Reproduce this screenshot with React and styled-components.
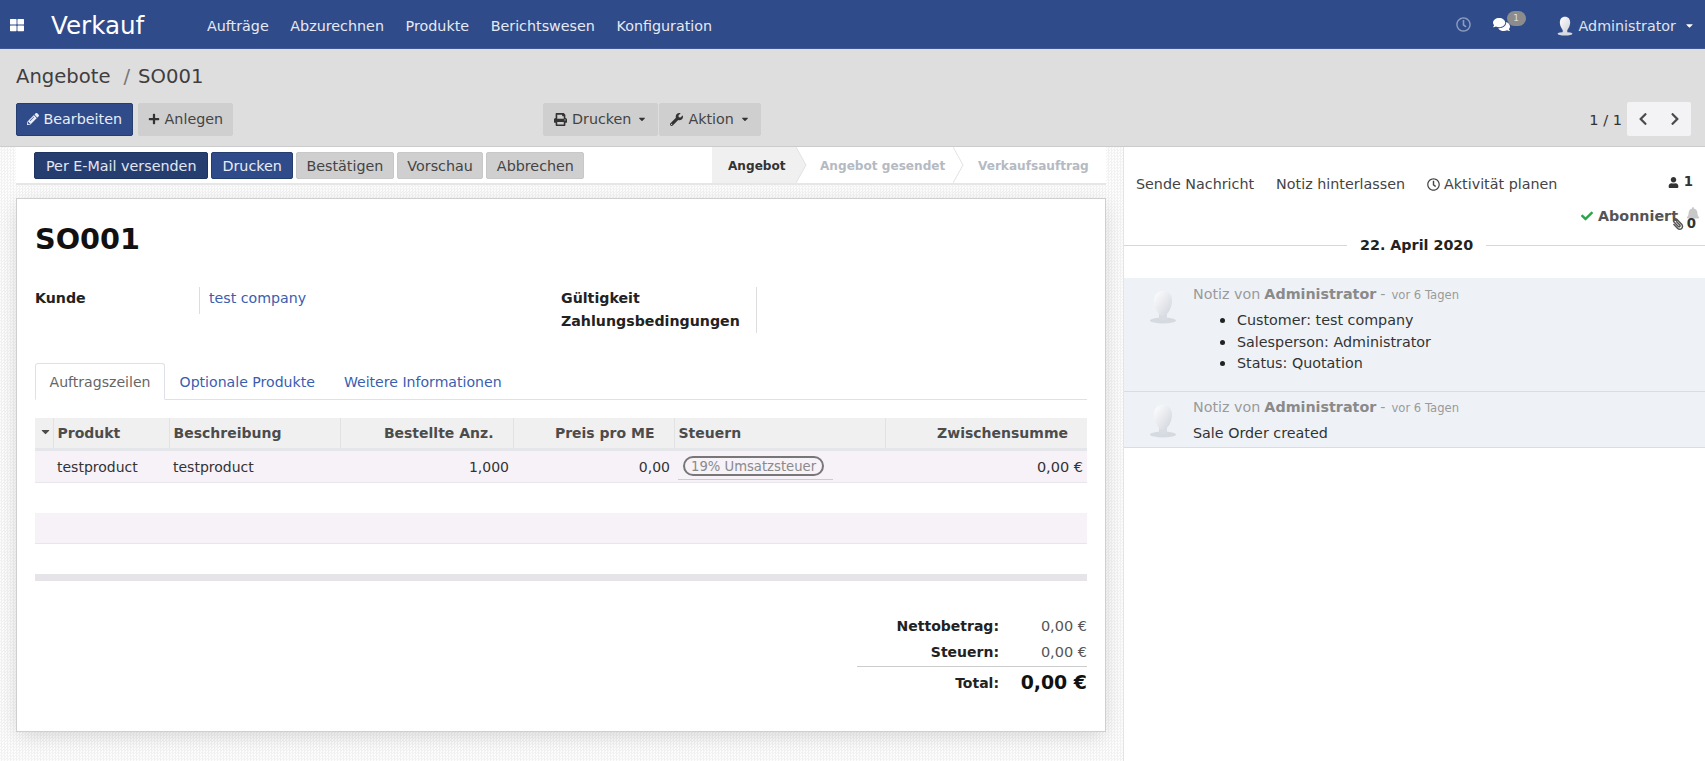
import React from 'react';
import styled, { createGlobalStyle } from 'styled-components';
import { FaThLarge, FaPencilAlt, FaPlus, FaPrint, FaWrench, FaRegClock, FaComments, FaChevronLeft, FaChevronRight, FaCheck, FaUser, FaBell, FaPaperclip, FaCaretDown } from 'react-icons/fa';

const Global = createGlobalStyle`
  html, body { margin: 0; padding: 0; height: 100%; overflow: hidden; }
  body { font-family: "DejaVu Sans", sans-serif; font-size: 14.3px; color: #212529; background: #fff; }
  * { box-sizing: border-box; }
`;

const Page = styled.div`
  width: 1705px; height: 761px; display: flex; flex-direction: column; overflow: hidden;
`;
const Navbar = styled.header`
  height: 49px; flex: none; background: #2f4b8a; color: #e4e8f1; display: flex; align-items: center;
  border-bottom: 1px solid #3d5893; padding-top: 3px;
`;
const AppsIcon = styled.span`
  width: 14px; margin-left: 10px; display: flex; font-size: 14px; color: #fff; margin-top: -2px;
`;
const AppName = styled.span`
  margin-left: 27px; width: 156px; font-size: 24.6px; color: #fff; letter-spacing: 0; margin-top: -1px;
`;
const MenuItem = styled.span`
  margin-right: 21.6px; font-size: 14.3px; color: #e6e9f2;
`;
const NavRight = styled.div`
  margin-left: auto; display: flex; align-items: center; color: #dfe4ef;
`;
const ClockIcon = styled.span`
  display: flex; font-size: 15px; color: #8d9cc1; margin-right: 22px; margin-top: -3px;
`;
const ChatWrap = styled.span`
  position: relative; display: flex; font-size: 17px; color: #fff; margin-right: 47px; margin-top: -2px;
`;
const NavBadge = styled.span`
  position: absolute; left: 14px; top: -5px; width: 19px; height: 15px; border-radius: 8px;
  background: #8c8c8c; color: #ddd; font-size: 9px; text-align: center; line-height: 15px;
`;
const UserName = styled.span`
  margin: 0 8px 0 6px; font-size: 14.3px;
`;
const CaretBox = styled.span`
  display: flex; font-size: 11px; margin-right: 10px; color: #fff;
`;

const ControlPanel = styled.section`
  height: 98px; flex: none; background: #dedede; border-bottom: 1px solid #ccc; padding: 0 14px 0 16px;
  display: flex; flex-direction: column;
`;
const Breadcrumb = styled.div`
  height: 53px; display: flex; align-items: center; font-size: 19.6px; color: #3f3f3f; padding-top: 2px;
`;
const Slash = styled.span`
  color: #777; margin: 0 8px 0 13px;
`;
const ButtonRow = styled.div`
  display: grid; grid-template-columns: 527px 1fr auto; align-items: center;
`;
const Group = styled.div`
  display: flex; gap: ${p => p.$gap ?? 5}px; align-items: center;
`;
const Btn = styled.span`
  height: ${p => p.$h ?? 33}px; padding: 0 ${p => p.$px ?? 10}px; display: inline-flex; align-items: center; gap: 5px;
  border-radius: 2px; font-size: 14.3px; white-space: nowrap;
  background: ${p => p.$bg ?? '#cfcfcf'}; color: ${p => p.$fg ?? '#444'};
  border: 1px solid ${p => p.$bd ?? '#cfcfcf'};
  svg { color: ${p => p.$fg ?? '#333'}; }
`;
const Caret = styled.span`
  display: flex; font-size: 10px; color: #444; margin-left: 1px;
`;
const Pager = styled.div`
  display: flex; align-items: center; gap: 5px; font-size: 14.6px; color: #333;
`;
const PagerButtons = styled.div`
  display: flex; background: #f3f2f4; border-radius: 2px; height: 34px; width: 64px;
`;
const PagerBtn = styled.span`
  flex: 1; display: flex; align-items: center; justify-content: center; font-size: 14px; color: #4a4a4a;
`;

const Main = styled.div`
  flex: 1; display: flex; min-height: 0;
`;
const Content = styled.main`
  width: 1124px; flex: none; padding: 0 17px 0 16px; border-right: 1px solid #e4e4e4;
  background-color: #fbfbfb;
  background-image: repeating-conic-gradient(#f2f2f2 0 25%, #fdfdfd 0 50%);
  background-size: 3px 3px;
`;
const StatusBar = styled.div`
  height: 38px; background: #fff; border-bottom: 2px solid #e6e6e6; display: flex; justify-content: space-between; margin-bottom: 13px;
`;
const Actions = styled.div`
  display: flex; gap: 3px; padding: 5px 0 0 18px;
`;
const Steps = styled.div`
  display: flex; height: 36px;
`;
const Step = styled.span`
  position: relative; display: flex; align-items: center; font-size: 12.1px; font-weight: 700; padding-top: 1px;
  width: ${p => p.$w}px; padding-left: ${p => p.$pl}px; color: ${p => p.$active ? '#333' : '#b5bac2'};
  background: ${p => p.$active ? '#f0f0f0' : '#fff'};
`;
const StepArrow = styled.svg`
  position: absolute; left: 100%; top: 0; width: 11px; height: 36px; z-index: 1;
`;

const Sheet = styled.article`
  height: 534px; background: #fff; border: 1px solid #cfcfcf; padding: 0 18px 0 18px;
  box-shadow: 0 5px 20px -3px rgba(0,0,0,.16); display: flex; flex-direction: column;
`;
const Title = styled.h1`
  margin: 21px 0 0; height: 38px; line-height: 38px; font-size: 28.7px; font-weight: 700; color: #111;
`;
const InfoGrid = styled.div`
  margin-top: 29px; display: grid; grid-template-columns: 526px 1fr; height: 46px;
`;
const InfoColumn = styled.div`
  display: flex; align-items: flex-start;
`;
const LabelStack = styled.div`
  width: ${p => p.$w}px; height: ${p => p.$h}px; padding-top: 1px; border-right: 1px solid #ddd; display: flex; flex-direction: column; gap: 3px;
`;
const FieldLabel = styled.span`
  font-weight: 700; color: #222; font-size: 14.2px; line-height: 20px; height: 20px;
`;
const CompanyLink = styled.span`
  color: #3a5db0; padding: 1px 0 0 9px; line-height: 20px; height: 21px; font-size: 14.2px;
`;
const Tabs = styled.nav`
  margin-top: 30px; height: 37px; display: flex; border-bottom: 1px solid #dee2e6; flex: none;
`;
const Tab = styled.span`
  height: 37px; padding: 0 13.5px; display: flex; align-items: center; font-size: 14.1px;
  color: ${p => p.$active ? '#666' : '#3a5db0'};
  background: ${p => p.$active ? '#fff' : 'transparent'};
  border: 1px solid ${p => p.$active ? '#dee2e6' : 'transparent'};
  border-bottom-color: ${p => p.$active ? '#fff' : 'transparent'};
  border-radius: 3px 3px 0 0;
`;
const Table = styled.table`
  margin-top: 18px; width: 1052px; border-collapse: collapse; table-layout: fixed; flex: none;
`;
const Th = styled.th`
  height: 31px; background: #f0f0f0; color: #4c4c4c; font-size: 14px; font-weight: 700; white-space: nowrap;
  text-align: ${p => p.$right ? 'right' : 'left'}; padding: 1px ${p => p.$right ? 19 : 4}px 0 4px;
  border-left: 1px solid #e2e2e2; border-bottom: 3px solid #e4e6e9;
  &:first-child { border-left: none; padding: 0 0 0 4px; }
`;
const Td = styled.td`
  height: 32px; padding: 2px 4px 0; white-space: nowrap; color: #333; font-size: ${p => p.$size ?? 14}px;
  text-align: ${p => p.$right ? 'right' : 'left'};
`;
const Tr = styled.tr`
  background: ${p => p.$tint ? '#f6f2f8' : '#fff'};
  height: ${p => p.$h ?? 30}px;
  border-bottom: 1px solid ${p => p.$line ? '#e8e6ea' : 'transparent'};
  border-top: 1px solid ${p => p.$top ? '#e8e6ea' : 'transparent'};
`;
const TaxField = styled.span`
  display: block; width: 155px; border-bottom: 1px solid #ccc; height: 26px; padding: 2px 0 0 5px;
`;
const TaxPill = styled.span`
  display: inline-flex; align-items: center; height: 20px; padding: 0 6px; border: 2px solid #777; border-radius: 10px; color: #8a8a8a; font-size: 13.2px;
`;
const TableFoot = styled.div`
  height: 7px; width: 1052px; background: #e6e3e9; flex: none;
`;
const Totals = styled.div`
  align-self: flex-end; width: 230px; margin-top: 32px; display: grid; grid-template-columns: 142px 88px; 
`;
const TotalLabel = styled.span`
  font-weight: 700; color: #222; text-align: right; font-size: 14px; height: 26px; line-height: 26px;
`;
const TotalValue = styled.span`
  text-align: right; color: #555; font-size: 14.5px; height: 26px; line-height: 26px;
`;
const TotalRule = styled.div`
  grid-column: 1 / -1; border-top: 1px solid #ccc; margin-top: 1px; height: 4px;
`;
const GrandValue = styled.span`
  text-align: right; color: #111; font-size: 18.9px; font-weight: 700; height: 26px; line-height: 24px;
`;

const Chatter = styled.aside`
  flex: 1; background: #fff; min-width: 0; display: flex; flex-direction: column;
`;
const ChatterTop = styled.div`
  position: relative; height: 88px; flex: none; padding: 27px 5px 0 12px;
`;
const ChatterActions = styled.div`
  display: flex; gap: 22px; color: #444; font-size: 14.3px; align-items: center; line-height: 20px;
`;
const ActivityItem = styled.span`
  display: inline-flex; align-items: center; gap: 4px;
`;
const Followers = styled.span`
  margin-left: auto; margin-right: 7px; display: inline-flex; align-items: center; gap: 5px; font-weight: 700; color: #333; font-size: 13.3px; margin-top: -4px;
`;
const Subscribe = styled.div`
  margin-top: 12px; display: flex; justify-content: flex-end; align-items: center; font-weight: 700; color: #555; font-size: 14.3px; line-height: 20px; gap: 5px;
`;
const Check = styled.span`
  display: flex; color: #27a745; font-size: 12px;
`;
const BellIcon = styled.span`
  display: flex; color: #c8c8c8; font-size: 14px; margin-left: 3px; margin-top: -4px;
`;
const Attach = styled.span`
  position: absolute; right: 9px; top: 69px; display: flex; align-items: center; gap: 3px; font-weight: 700; font-size: 13.3px; color: #333;
`;
const ClipIcon = styled.span`
  display: flex; font-size: 12px; color: #555; transform: scaleX(-1);
`;
const DateSep = styled.div`
  height: 20px; display: flex; align-items: center; gap: 13px; font-weight: 700; font-size: 14.3px; color: #222; flex: none;
  &::before, &::after { content: ""; flex: 1; border-top: 1px solid #cfd8e3; }
  &::before { flex: none; width: 223px; }
`;
const Message = styled.div`
  display: flex; flex: none; background: #eef2f6; border-bottom: 1px solid #d6dde5; height: ${p => p.$h}px; margin-top: ${p => p.$mt ?? 0}px;
`;
const AvatarBox = styled.div`
  width: 69px; padding: 12px 0 0 25px; flex: none;
`;
const MsgBody = styled.div`
  flex: 1; padding-top: ${p => p.$pt ?? 7}px;
`;
const MsgHead = styled.div`
  color: #9a9a9a; font-size: 14.3px; line-height: 18px; display: flex; align-items: baseline; gap: 4px;
`;
const Author = styled.b`
  color: #8a8a8a; font-weight: 700;
`;
const Ago = styled.span`
  font-size: 11.6px; color: #9a9a9a; margin-left: 2px;
`;
const Changes = styled.ul`
  margin: 5px 0 0; padding: 0 0 0 44px; color: #333; font-size: 14.3px;
  li { height: 21.5px; line-height: 21.5px; }
  li::marker { font-size: 17px; color: #222; }
`;
const Body = styled.div`
  margin-top: 7px; color: #333; font-size: 14.3px; line-height: 18px;
`;

const Avatar = ({ w = 28, h = 34 }) => (
  <svg width={w} height={h} viewBox="0 0 28 34">
    <defs>
      <linearGradient id="face" x1="0" y1="0" x2="1" y2="1">
        <stop offset="0" stopColor="#ffffff" />
        <stop offset="1" stopColor="#cfd3db" />
      </linearGradient>
    </defs>
    <ellipse cx="14" cy="30.5" rx="13" ry="3" fill="#d5d9e0" />
    <path d="M10 22h8v7c0 1.5-8 1.5-8 0z" fill="#d9dce3" />
    <path d="M14 1c6 0 9 4 9 10 0 7-5 15-9 15S5 18 5 11C5 5 8 1 14 1z" fill="url(#face)" />
  </svg>
);

export default function App() {
  return (
    <Page>
      <Global />
      <Navbar>
        <AppsIcon><FaThLarge /></AppsIcon>
        <AppName>Verkauf</AppName>
        {['Aufträge', 'Abzurechnen', 'Produkte', 'Berichtswesen', 'Konfiguration'].map(m => <MenuItem key={m}>{m}</MenuItem>)}
        <NavRight>
          <ClockIcon><FaRegClock /></ClockIcon>
          <ChatWrap><FaComments /><NavBadge>1</NavBadge></ChatWrap>
          <Avatar w={16} h={20} />
          <UserName>Administrator</UserName>
          <CaretBox><FaCaretDown /></CaretBox>
        </NavRight>
      </Navbar>
      <ControlPanel>
        <Breadcrumb>Angebote<Slash>/</Slash>SO001</Breadcrumb>
        <ButtonRow>
          <Group>
            <Btn $px={9.5} $bg="#2f4b8a" $fg="#e9edf5" $bd="#263d70"><FaPencilAlt size={12} />Bearbeiten</Btn>
            <Btn $px={9}><FaPlus size={12} />Anlegen</Btn>
          </Group>
          <Group $gap={1}>
            <Btn $px={10}><FaPrint size={13} />Drucken<Caret><FaCaretDown /></Caret></Btn>
            <Btn $px={10}><FaWrench size={13} />Aktion<Caret><FaCaretDown /></Caret></Btn>
          </Group>
          <Pager>
            1 / 1
            <PagerButtons>
              <PagerBtn><FaChevronLeft /></PagerBtn>
              <PagerBtn><FaChevronRight /></PagerBtn>
            </PagerButtons>
          </Pager>
        </ButtonRow>
      </ControlPanel>
      <Main>
        <Content>
          <StatusBar>
            <Actions>
              <Btn $h={27} $px={11} $bg="#263d70" $fg="#e2e6f0" $bd="#1f3361">Per E-Mail versenden</Btn>
              <Btn $h={27} $px={10} $bg="#2f4b8a" $fg="#e9edf5" $bd="#263d70">Drucken</Btn>
              <Btn $h={27} $px={9.5} $bd="#c8c8c8">Bestätigen</Btn>
              <Btn $h={27} $px={9.5} $bd="#c8c8c8">Vorschau</Btn>
              <Btn $h={27} $px={9.5} $bd="#c8c8c8">Abbrechen</Btn>
            </Actions>
            <Steps>
              <Step $active $w={84} $pl={16}>Angebot
                <StepArrow viewBox="0 0 11 36"><path d="M0 0l10 18L0 36z" fill="#f0f0f0" stroke="none" /><path d="M0 0l10 18L0 36" fill="none" stroke="#e2e2e2" /></StepArrow>
              </Step>
              <Step $w={157} $pl={24}>Angebot gesendet
                <StepArrow viewBox="0 0 11 36"><path d="M0 0l10 18L0 36" fill="none" stroke="#e2e2e2" /></StepArrow>
              </Step>
              <Step $w={153} $pl={25}>Verkaufsauftrag</Step>
            </Steps>
          </StatusBar>
          <Sheet>
            <Title>SO001</Title>
            <InfoGrid>
              <InfoColumn>
                <LabelStack $w={165} $h={27}><FieldLabel>Kunde</FieldLabel></LabelStack>
                <CompanyLink>test company</CompanyLink>
              </InfoColumn>
              <InfoColumn>
                <LabelStack $w={196} $h={46}>
                  <FieldLabel>Gültigkeit</FieldLabel>
                  <FieldLabel>Zahlungsbedingungen</FieldLabel>
                </LabelStack>
              </InfoColumn>
            </InfoGrid>
            <Tabs>
              <Tab $active>Auftragszeilen</Tab>
              <Tab>Optionale Produkte</Tab>
              <Tab>Weitere Informationen</Tab>
            </Tabs>
            <Table>
              <colgroup>
                <col style={{ width: 18 }} /><col style={{ width: 116 }} /><col style={{ width: 171 }} /><col style={{ width: 173 }} /><col style={{ width: 161 }} /><col style={{ width: 211 }} /><col style={{ width: 202 }} />
              </colgroup>
              <thead>
                <tr>
                  <Th><FaCaretDown size={13} /></Th>
                  <Th>Produkt</Th>
                  <Th>Beschreibung</Th>
                  <Th $right>Bestellte Anz.</Th>
                  <Th $right>Preis pro ME</Th>
                  <Th>Steuern</Th>
                  <Th $right>Zwischensumme</Th>
                </tr>
              </thead>
              <tbody>
                <Tr $tint $line $h={33}>
                  <Td />
                  <Td>testproduct</Td>
                  <Td>testproduct</Td>
                  <Td $right>1,000</Td>
                  <Td $right>0,00</Td>
                  <Td><TaxField><TaxPill>19% Umsatzsteuer</TaxPill></TaxField></Td>
                  <Td $right $size={14.5}>0,00 €</Td>
                </Tr>
                <Tr><Td colSpan={7} style={{ height: 31 }} /></Tr>
                <Tr $tint $line $top><Td colSpan={7} style={{ height: 30 }} /></Tr>
                <Tr><Td colSpan={7} style={{ height: 30 }} /></Tr>
              </tbody>
            </Table>
            <TableFoot />
            <Totals>
              <TotalLabel>Nettobetrag:</TotalLabel><TotalValue>0,00 €</TotalValue>
              <TotalLabel>Steuern:</TotalLabel><TotalValue>0,00 €</TotalValue>
              <TotalRule />
              <TotalLabel>Total:</TotalLabel><GrandValue>0,00 €</GrandValue>
            </Totals>
          </Sheet>
        </Content>
        <Chatter>
          <ChatterTop>
            <ChatterActions>
              <span>Sende Nachricht</span>
              <span>Notiz hinterlassen</span>
              <ActivityItem><FaRegClock size={13} />Aktivität planen</ActivityItem>
              <Followers><FaUser size={11} />1</Followers>
            </ChatterActions>
            <Subscribe>
              <Check><FaCheck /></Check>Abonniert<BellIcon><FaBell /></BellIcon>
            </Subscribe>
            <Attach><ClipIcon><FaPaperclip /></ClipIcon>0</Attach>
          </ChatterTop>
          <DateSep>22. April 2020</DateSep>
          <Message $h={114} $mt={23}>
            <AvatarBox><Avatar /></AvatarBox>
            <MsgBody>
              <MsgHead>Notiz von <Author>Administrator</Author> - <Ago>vor 6 Tagen</Ago></MsgHead>
              <Changes>
                <li>Customer: test company</li>
                <li>Salesperson: Administrator</li>
                <li>Status: Quotation</li>
              </Changes>
            </MsgBody>
          </Message>
          <Message $h={56}>
            <AvatarBox><Avatar /></AvatarBox>
            <MsgBody $pt={6}>
              <MsgHead>Notiz von <Author>Administrator</Author> - <Ago>vor 6 Tagen</Ago></MsgHead>
              <Body>Sale Order created</Body>
            </MsgBody>
          </Message>
        </Chatter>
      </Main>
    </Page>
  );
}
